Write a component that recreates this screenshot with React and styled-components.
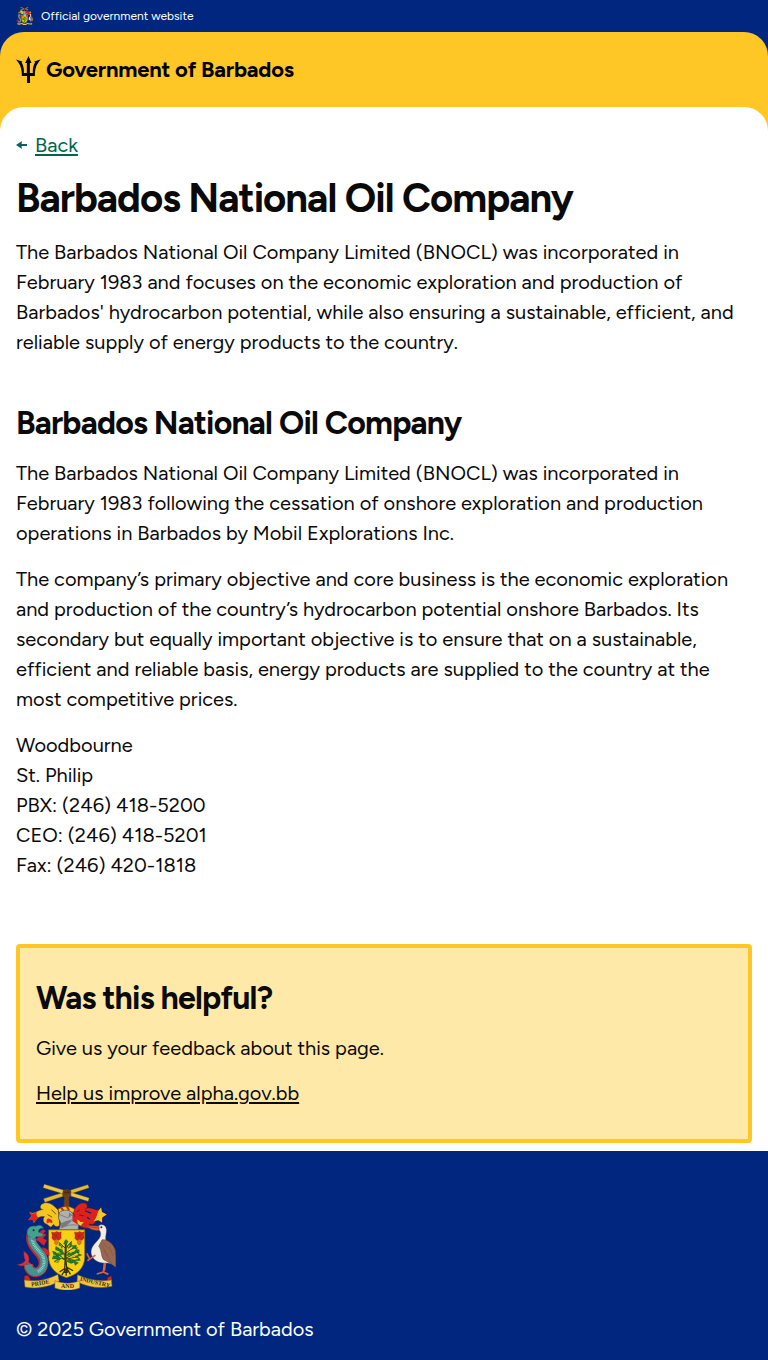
import React from "react";
import styled, { createGlobalStyle } from "styled-components";

const color = {
  blue: "#00267f",
  yellow: "#ffc726",
  pale: "#ffe9a8",
  ink: "#0a0a0a",
  green: "#00654a",
  teal: "#0e5f64",
};

const GlobalStyle = createGlobalStyle`
  *, *::before, *::after { box-sizing: border-box; }
  html { background: ${color.blue}; }
  body {
    margin: 0;
    color: ${color.ink};
    font-family: Figtree, "Liberation Sans", Arial, sans-serif;
    font-size: 20px;
    line-height: 30px;
  }
  h1, h2, p, address { margin: 0; }
`;

const OfficialBar = styled.div`
  display: flex;
  align-items: center;
  gap: 8px;
  height: 32px;
  padding: 0 16px;
  background: ${color.blue};
  color: #fff;
  font-size: 12px;
  line-height: 16px;
`;

const HeaderWrap = styled.div`
  background: ${color.blue};
`;

const Header = styled.header`
  display: flex;
  padding: 24px 16px;
  background: ${color.yellow};
  border-radius: 24px 24px 0 0;
`;

const Brand = styled.a`
  display: flex;
  align-items: center;
  gap: 5px;
  color: #000;
  font-size: 22px;
  font-weight: 700;
  letter-spacing: -0.01em;
  line-height: 27px;
  text-decoration: none;
`;

const MainWrap = styled.div`
  background: ${color.yellow};
`;

const Main = styled.main`
  display: flex;
  flex-direction: column;
  padding: 24px 16px 8px;
  background: #fff;
  border-radius: 24px 24px 0 0;
`;

const BackRow = styled.nav`
  display: flex;
  align-items: center;
  gap: 8px;
  margin-bottom: 16px;
  color: ${color.teal};
`;

const TextLink = styled.a`
  color: ${(p) => p.$color || color.ink};
  line-height: 28px;
  text-decoration: underline;
  text-decoration-thickness: 2px;
  text-underline-offset: 2px;
`;

const Title = styled.h1`
  font-size: 40px;
  font-weight: 700;
  letter-spacing: -0.025em;
  line-height: 46px;
`;

const Heading = styled.h2`
  font-size: 32px;
  font-weight: 700;
  letter-spacing: -0.025em;
  line-height: 37px;
`;

const Stack = styled.section`
  display: flex;
  flex-direction: column;
  align-items: flex-start;
  gap: 16px;
  margin-bottom: ${(p) => p.$after || 0}px;
`;

const Address = styled.address`
  font-style: normal;
`;

const Line = styled.span`
  display: block;
`;

const Feedback = styled(Stack)`
  padding: 32px 16px;
  background: ${color.pale};
  border: 4px solid ${color.yellow};
  border-radius: 4px;
`;

const Footer = styled.footer`
  display: flex;
  flex-direction: column;
  align-items: flex-start;
  gap: 24px;
  padding: 32px 16px 16px;
  background: ${color.blue};
  color: #fff;
`;

const CrestSvg = styled.svg`
  display: block;
  flex: none;
`;

const Motto = styled.text`
  font-family: "Liberation Serif", serif;
  font-size: 18px;
  font-weight: 700;
  fill: #3a2c0c;
  text-anchor: middle;
`;

function Crest({ width, height, motto }) {
  return (
    <CrestSvg width={width} height={height} viewBox="24 22 304 320" aria-hidden="true">
      {/* crossed canes and hand */}
      <path d="M107 68 240 26l4 9L111 79z" fill="#e9b92a" stroke="#8a6a1c" strokeWidth="1" />
      <path d="M109 25 244 66l-3 10L106 35z" fill="#f1c63c" stroke="#8a6a1c" strokeWidth="1" />
      <path d="M166 45q2-7 14-6l9 5v15l-5 6 2 30h-20l3-30-5-9z" fill="#6c3f20" stroke="#33200f" strokeWidth="1.5" />
      <path d="M169 50l18-1M172 44v12m6-14v13m5-12v12" stroke="#34200f" strokeWidth="1.5" />
      {/* mantling */}
      <path d="M151 103C138 88 124 78 110 81c-17 4-15 20-4 20-18 1-26 17-42 7l7 12-10 12 14 0 3 9c8-16 19-21 32-19-7 9-4 20 7 23l12 9 8-9c5 9 13 8 18 3z" fill="#f5c51f" stroke="#6e3b12" strokeWidth="1" />
      <path d="M87 105c-8 9-15 10-23 4l7 12-10 12 14-1 4 10c5-9 8-13 14-17-8-3-9-12-6-20z" fill="#e02420" />
      <path d="M122 128c7 1 14 6 11 14l-8-3-8 4c-3-9 0-15 5-15z" fill="#dd2a20" />
      <path d="M131 101l13 14M119 116l14 8" fill="none" stroke="#7c4a10" strokeWidth="3" />
      <path d="M197 109c4-15 15-27 29-28 15-1 16 16 6 18 15-7 25 3 40 4l8-8 2 13 15 8-13 9-1 15c-8-4-10-10-19-11 2 13-9 19-18 15l-8 14-17-5-14-9z" fill="#df211d" stroke="#701811" strokeWidth="1" />
      <path d="M272 105l8-10 3 13 14 8-14 9v15l-11-7-15 3c10-9 10-19 15-31zM197 128c10 0 16 4 21 10l10 0-9 12-13-7z" fill="#f4c724" />
      <path d="M232 105l18 7M238 124l8 6" fill="none" stroke="#00267f" strokeWidth="4" />
      <path d="M207 108l9-7M214 117l14 3" fill="none" stroke="#7c1511" strokeWidth="3" />
      {/* torse and helmet */}
      <path d="M151 99q25-15 49 0l-3 13q-22-12-44 0z" fill="#f3c21f" stroke="#873a12" strokeWidth="2" />
      <path d="M160 96l8 10m9-14 7 12" stroke="#c72a19" strokeWidth="6" />
      <path d="M154 111c9-13 36-10 42 4l1 20 15 12-1 15h-57l5-20-7-15z" fill="#afb2b1" stroke="#535857" strokeWidth="2" />
      <path d="M156 116l23 10 15-9m-37 27 34-12 8 5m-39 20q24-14 48-9" fill="none" stroke="#656968" strokeWidth="2" />
      <path d="M160 144q18-13 32-9l-19 17-14 4zM184 110l8 6-10 8z" fill="#777c7b" />
      <path d="M194 116l14 14 2 16-16-11z" fill="#df211d" />
      {/* shield */}
      <path d="M122 162h109v80c0 33-20 54-55 64-33-11-54-31-54-64z" fill="#fad015" stroke="#735a12" strokeWidth="2" />
      {[131, 200].map((x) => (
        <g key={x} transform={`translate(${x} 166)`}>
          <path d="M0 3l10 1 5-3 8 3 6-2-1 10 1 9-6 6-8-2-8 3-6-7 1-9z" fill="#d82418" stroke="#831d11" strokeWidth="1" />
          <path d="M7 9l7 5 8-6M6 20l8-6 8 6M14 7v15" fill="none" stroke="#7a3a14" strokeWidth="1.5" />
          <path d="M9 28l6-3 6 3-1 9-6 5-5-5z" fill="#db7b1c" stroke="#94501a" />
        </g>
      ))}
      <path d="M173 194c5 24-2 51 3 76l2 20h-8l2-37zM173 277l-18 12m19-10-12 19m13-20 0 22m2-22 11 18m-12-22 20 11" fill="none" stroke="#35310f" strokeWidth="4" />
      <path d="M174 253l-30-15m29-2-30-19m30 1-17-16m19 45 28-15m-28-1 28-19m-27 3 15-18m-14 53 29-7m-28 5-41-1" fill="none" stroke="#3e4310" strokeWidth="3" />
      <path
        d="M174 191l-7 12 8 4 6-10zm-19 8-2 10 12 3-5 8-16-8-1 10 15 6-9 3-15-5 3 10 15 4-16 0-3 10 17-2-12 10 13 2 9-13 10 6-12-15 12-3 2 12zM191 197l-14 14 4 7 14-8-2 10 17-5-11 13-18 3-4 9 18-4 20-9-5 12-18 3 24 6-15 5-18-4-7 8 14 6 9-3 3 9 10-8-13-6 19-1-8-12 12-4-14-6 7-9-11-3 2-12-14 2z"
        fill="#217a2d"
        stroke="#165521"
        strokeWidth="1"
      />
      <path d="M154 216l9 4m-18 10 13 2m27-24-5 7m17 10-11 7m16 10-13 2m-33 11-12 2m10-15 8 5" stroke="#eac419" strokeWidth="3" />
      {/* dolphin */}
      <path d="M106 160l-16 12 3 10-11 10 10 4 16 14 9-17-12-6 11-10-10-5 8-6zM101 215c18 1 25 11 23 25l-8-3 5 14-12-10-1-15z" fill="#d82133" stroke="#86202d" strokeWidth="1" />
      <path d="M27 265c12 1 20-3 25-11-5-9-4-20-5-28 14 9 19 19 15 33l7 5 8 17c-12 6-17-8-20-17-12 8-20 9-30 1z" fill="#da3040" stroke="#8c1826" strokeWidth="1" />
      <path d="M74 168c-14 26 4 46 22 66 18 21 12 54-12 56-14 0-22-11-23-24" fill="none" stroke="#cf2431" strokeWidth="29" />
      <path d="M76 168c-14 26 4 44 22 64 18 21 12 56-14 58-14 0-22-11-23-24" fill="none" stroke="#3f958f" strokeWidth="22" />
      <path d="M76 172c-10 26 7 42 24 62 15 19 9 46-11 54" fill="none" stroke="#9bd1bb" strokeWidth="9" strokeDasharray="3 2" />
      <path d="M58 176c-4-18 9-28 26-25 12-7 20 0 23 6-11-1-16 4-15 12l14 5-2 8-20 1-8 9z" fill="#45a08f" stroke="#205d61" strokeWidth="1.5" />
      <circle cx="77" cy="163" r="3" fill="#113336" />
      {/* pelican */}
      <path d="M271 152c8-9 24-6 25 9 1 13-5 23-1 34l15 13c14 13 14 39 13 65-12-12-19-10-30-11-23 1-42-12-43-33 0-25 29-35 29-54 0-9-4-13-8-15z" fill="#f2eee6" stroke="#766e6b" strokeWidth="1" />
      <path d="M283 192c15-3 34 11 40 31 2 18 1 39 0 51-10-10-24-16-35-22-9-10-5-29-15-41z" fill="#9a6750" stroke="#573b32" strokeWidth="1.5" />
      <path d="M287 200l14 19m-19-13 18 35m-13-19 25 39m-8-50 12 28" stroke="#7a5140" strokeWidth="1.5" />
      <path d="M274 151l-40-3 2 5c12 7 25 13 38 10z" fill="#e75d2c" stroke="#89351d" strokeWidth="1.5" />
      <path d="M237 152l38 5" stroke="#943319" strokeWidth="2" />
      <circle cx="281" cy="154" r="3" fill="#262321" />
      <path d="M263 238l-17 12-9-17m9 17-7 5m51 7-3 27-20 6m20-6 15 7m-9-35-3 24" fill="none" stroke="#df6331" strokeWidth="5" />
      {/* motto ribbon */}
      <path d="M49 301l11-2 7 11-5 15-13-8z" fill="#c92c1e" stroke="#741b13" />
      <path d="M298 307l13-7 2 15-9 8z" fill="#c92c1e" stroke="#741b13" />
      <path d="M49 313c36 6 67 0 101-17l4 21c-29 17-67 24-103 17z" fill="#f1c544" stroke="#80611a" strokeWidth="1.5" />
      <path d="M209 297c30 14 68 22 102 16l2 19c-38 8-74 2-105-14z" fill="#f1c544" stroke="#80611a" strokeWidth="1.5" />
      <path d="M141 315c25 10 52 10 75 0v22c-25 9-51 9-75 0z" fill="#f7cf4e" stroke="#80611a" strokeWidth="1.5" />
      {motto && (
        <>
          <Motto x="98" y="328" transform="rotate(-10 98 328)">PRIDE</Motto>
          <Motto x="179" y="337">AND</Motto>
          <Motto x="261" y="325" transform="rotate(13 261 325)">INDUSTRY</Motto>
        </>
      )}
    </CrestSvg>
  );
}

function Trident() {
  return (
    <svg width="25" height="27" viewBox="48 168 75 81" aria-hidden="true">
      <path
        d="M85.500 168l9 21h-5v30h9c-1-14 2-23 7-33l-4-1 21-7-7 9c-9 12-11 25-11 41H90v21h-9v-21H65.500c0-16-2-29-11-41l-7-9 21 7-4 1c5 10 8 19 7 33h9v-30h-5z"
        fill="#000"
      />
    </svg>
  );
}

function BackArrow() {
  return (
    <svg width="11" height="8" viewBox="0 0 11 8" aria-hidden="true">
      <path d="M0 4L6 0 5.500 3H11V5H5.500L6 8z" fill="currentColor" />
    </svg>
  );
}

export default function App() {
  return (
    <>
      <GlobalStyle />
      <OfficialBar>
        <Crest width={17} height={18} />
        <span>Official government website</span>
      </OfficialBar>
      <HeaderWrap>
        <Header>
          <Brand href="#">
            <Trident />
            Government of Barbados
          </Brand>
        </Header>
      </HeaderWrap>
      <MainWrap>
        <Main>
          <BackRow aria-label="Back">
            <BackArrow />
            <TextLink href="#" $color={color.green}>Back</TextLink>
          </BackRow>
          <Stack $after={48}>
            <Title>Barbados National Oil Company</Title>
            <p>
              The Barbados National Oil Company Limited (BNOCL) was incorporated in February 1983 and
              focuses on the economic exploration and production of Barbados' hydrocarbon potential,
              while also ensuring a sustainable, efficient, and reliable supply of energy products to
              the country.
            </p>
          </Stack>
          <Stack $after={64}>
            <Heading>Barbados National Oil Company</Heading>
            <p>
              The Barbados National Oil Company Limited (BNOCL) was incorporated in February 1983
              following the cessation of onshore exploration and production operations in Barbados by
              Mobil Explorations Inc.
            </p>
            <p>
              The company’s primary objective and core business is the economic exploration and
              production of the country’s hydrocarbon potential onshore Barbados. Its secondary but
              equally important objective is to ensure that on a sustainable, efficient and reliable
              basis, energy products are supplied to the country at the most competitive prices.
            </p>
            <Address>
              <Line>Woodbourne</Line>
              <Line>St. Philip</Line>
              <Line>PBX: (246) 418-5200</Line>
              <Line>CEO: (246) 418-5201</Line>
              <Line>Fax: (246) 420-1818</Line>
            </Address>
          </Stack>
          <Feedback>
            <Heading>Was this helpful?</Heading>
            <p>Give us your feedback about this page.</p>
            <TextLink href="#">Help us improve alpha.gov.bb</TextLink>
          </Feedback>
        </Main>
      </MainWrap>
      <Footer>
        <Crest width={101} height={107} motto />
        <p>© 2025 Government of Barbados</p>
      </Footer>
    </>
  );
}
